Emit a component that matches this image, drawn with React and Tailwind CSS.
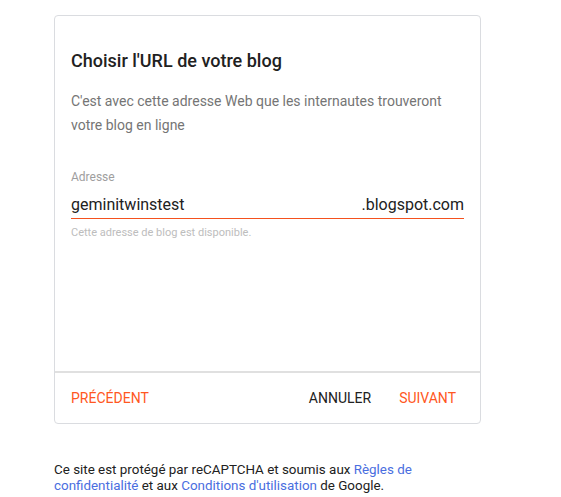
export default function App() {
  return (
    <main className="bg-white min-h-[497px] pl-[54px] pt-[15px]" style={{ fontFamily: 'Roboto, "Liberation Sans", sans-serif' }}>
      <div className="w-[427px] h-[409px] border border-[#dadce0] rounded flex flex-col">
        <div className="flex-1 px-4 pt-[33px]">
          <h1 className="text-[18px] leading-6 font-medium text-[#212121]">Choisir l'URL de votre blog</h1>
          <p className="mt-4 text-sm leading-6 text-[#757575]">
            C'est avec cette adresse Web que les internautes trouveront votre blog en ligne
          </p>
          <label className="block mt-8 text-xs leading-4 text-[#9e9e9e]">Adresse</label>
          <div className="mt-[10px] flex justify-between border-b border-[#f4511e] pb-[3px] text-base leading-5 text-[#212121]">
            <span>geminitwinstest</span>
            <span>.blogspot.com</span>
          </div>
          <p className="mt-[6px] text-[11px] leading-4 text-[#bdbdbd]">Cette adresse de blog est disponible.</p>
        </div>
        <div className="border-t-2 border-[#e0e0e0] h-[52px] px-4 flex items-center text-sm">
          <button className="text-[#ff5722]">PRÉCÉDENT</button>
          <div className="ml-auto flex gap-7 pr-2">
            <button className="text-[#212121]">ANNULER</button>
            <button className="text-[#ff5722]">SUIVANT</button>
          </div>
        </div>
      </div>
      <p className="mt-[38px] w-[390px] text-[13.4px] leading-4 text-[#212121]">
        Ce site est protégé par reCAPTCHA et soumis aux <a className="text-[#4a6ee0]">Règles de confidentialité</a> et aux <a className="text-[#4a6ee0]">Conditions d'utilisation</a> de Google.
      </p>
    </main>
  );
}
